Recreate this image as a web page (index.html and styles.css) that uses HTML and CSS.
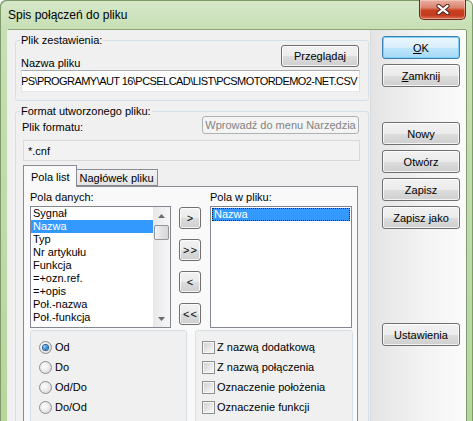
FILE: index.html
```html
<!DOCTYPE html>
<html lang="pl">
<head>
<meta charset="utf-8">
<title>Spis połączeń do pliku</title>
<link rel="stylesheet" href="styles.css">
</head>
<body>
<div class="window">
  <div class="titlebar">
    <span class="title">Spis połączeń do pliku</span>
    <div class="close">
      <svg width="14" height="11" viewBox="0 0 14 11">
        <path d="M2.5 1.8 L11.5 9.2 M11.5 1.8 L2.5 9.2" stroke="#4e2219" stroke-width="4.2" stroke-linecap="round" fill="none"/>
        <path d="M2.5 1.8 L11.5 9.2 M11.5 1.8 L2.5 9.2" stroke="#ffffff" stroke-width="2.2" stroke-linecap="round" fill="none"/>
      </svg>
    </div>
  </div>
  <div class="frame">
    <div class="client">
      <div class="main">
        <fieldset class="group g1">
          <legend>Plik zestawienia:</legend>
          <div class="row row1">
            <span class="lbl-end">Nazwa pliku</span>
            <div class="btn browse">Przeglądaj</div>
          </div>
          <div class="edit path"><span>PS\PROGRAMY\AUT 16\PCSELCAD\LIST\PCSMOTORDEMO2-NET.CSV</span></div>
        </fieldset>
        <fieldset class="group g2">
          <legend>Format utworzonego pliku:</legend>
          <div class="row row2">
            <span class="lbl-end fmt">Plik formatu:</span>
            <div class="btn disabled tools">Wprowadź do menu Narzędzia</div>
          </div>
          <div class="static">*.cnf</div>
          <div class="tabs">
            <div class="tab active">Pola list</div>
            <div class="tab">Nagłówek pliku</div>
          </div>
          <div class="tabpage">
            <div class="lists">
              <div class="col col-left">
                <div class="lbl">Pola danych:</div>
                <div class="listbox lb1">
                  <div class="items">
                    <div class="item">Sygnał</div>
                    <div class="item sel">Nazwa</div>
                    <div class="item">Typ</div>
                    <div class="item">Nr artykułu</div>
                    <div class="item">Funkcja</div>
                    <div class="item">=+ozn.ref.</div>
                    <div class="item">=+opis</div>
                    <div class="item">Poł.-nazwa</div>
                    <div class="item">Poł.-funkcja</div>
                  </div>
                  <div class="scrollbar">
                    <div class="sb-arrow">
                      <svg width="7" height="4" viewBox="0 0 7 4"><path d="M0 4 L3.5 0 L7 4 Z" fill="#6b6b6b"/></svg>
                    </div>
                    <div class="sb-thumb"></div>
                    <div class="sb-space"></div>
                    <div class="sb-arrow">
                      <svg width="7" height="4" viewBox="0 0 7 4"><path d="M0 0 L3.5 4 L7 0 Z" fill="#6b6b6b"/></svg>
                    </div>
                  </div>
                </div>
              </div>
              <div class="arrows">
                <div class="btn small">&gt;</div>
                <div class="btn small">&gt;&gt;</div>
                <div class="btn small">&lt;</div>
                <div class="btn small">&lt;&lt;</div>
              </div>
              <div class="col col-right">
                <div class="lbl">Pola w pliku:</div>
                <div class="listbox lb2">
                  <div class="item sel focus">Nazwa</div>
                </div>
              </div>
            </div>
            <div class="options">
              <div class="panel radios">
                <div class="opt"><span class="radio on"></span>Od</div>
                <div class="opt"><span class="radio"></span>Do</div>
                <div class="opt"><span class="radio"></span>Od/Do</div>
                <div class="opt"><span class="radio"></span>Do/Od</div>
              </div>
              <div class="panel checks">
                <div class="opt"><span class="check"></span>Z nazwą dodatkową</div>
                <div class="opt"><span class="check"></span>Z nazwą połączenia</div>
                <div class="opt"><span class="check"></span>Oznaczenie położenia</div>
                <div class="opt"><span class="check"></span>Oznaczenie funkcji</div>
              </div>
            </div>
          </div>
        </fieldset>
      </div>
      <div class="side">
        <div class="btn default"><span><u>O</u>K</span></div>
        <div class="btn"><span><u>Z</u>amknij</span></div>
        <div class="btn gap-big">Nowy</div>
        <div class="btn">Otwórz</div>
        <div class="btn">Zapisz</div>
        <div class="btn">Zapisz jako</div>
        <div class="btn gap-huge">Ustawienia</div>
      </div>
    </div>
  </div>
</div>
</body>
</html>
```
FILE: styles.css
```css
* { box-sizing: border-box; }
html, body { margin: 0; padding: 0; }
body {
  width: 473px;
  height: 421px;
  overflow: hidden;
  background: #ffffff;
  color: #000;
  font: 11px/14px "Liberation Sans", Arial, sans-serif;
}

.window {
  width: 473px;
  height: 421px;
  overflow: hidden;
  display: flex;
  flex-direction: column;
  background: linear-gradient(to bottom, #d7e8ca 0px, #c6dfb3 30px, #b7d69c 100%);
  border-radius: 6px 6px 0 0;
  box-shadow: inset 1px 1px 0 #7f9b6c, inset -1px 0 0 #7f9b6c;
}

/* title bar */
.titlebar {
  height: 30px;
  flex: none;
  display: flex;
  align-items: flex-start;
}
.title {
  margin: 7px 0 0 8px;
  font-size: 12px;
  line-height: 16px;
  color: #000;
}
.close {
  margin-left: auto;
  margin-right: 7px;
  width: 47px;
  height: 20px;
  border: 1px solid #6d2a1f;
  border-top: none;
  border-radius: 0 0 5px 5px;
  background: linear-gradient(to bottom, #eab0a2 0%, #dc836e 40%, #c8401f 55%, #c33a1e 80%, #d9714f 100%);
  box-shadow: inset 0 0 0 1px rgba(255, 220, 210, 0.45);
  display: flex;
  align-items: center;
  justify-content: center;
}

/* frame and client area */
.frame {
  flex: 1;
  min-height: 0;
  display: flex;
  padding: 0 7px 0 8px;
}
.client {
  flex: 1;
  display: flex;
  background: #f0f0f0;
  box-shadow: 0 -1px 0 #8ea57c, -1px 0 0 #e9f2e1, 1px 0 0 #7f9b6c;
}
.main {
  width: 362px;
  flex: none;
  padding: 3px 0 0 7px;
  background: #f0f0f0;
}
.side {
  flex: 1;
  display: flex;
  flex-direction: column;
  gap: 5px;
  padding: 6px 0 0 11px;
  border-left: 1px solid #dadada;
  background: linear-gradient(to right, #e4e4e4 0%, #f3f3f3 55%, #fbfbfb 100%);
}
.side .btn { width: 78px; height: 23px; }
.side .gap-big { margin-top: 30px; }
.side .gap-huge { margin-top: 89px; }

/* buttons */
.btn {
  display: flex;
  align-items: center;
  justify-content: center;
  border: 1px solid #707070;
  border-radius: 3px;
  background: linear-gradient(to bottom, #f2f2f2 0%, #ebebeb 50%, #dddddd 51%, #cfcfcf 100%);
  box-shadow: inset 0 0 0 1px rgba(255, 255, 255, 0.75);
  font-size: 11px;
  color: #000;
  white-space: nowrap;
}
.btn u { text-decoration: underline; text-underline-offset: 1px; }
.btn.default {
  border-color: #3c7fb1;
  background: linear-gradient(to bottom, #eaf6fd 0%, #d9f0fc 50%, #bee6fd 51%, #a7d9f5 100%);
  box-shadow: inset 0 0 0 1px #7fd0f5;
}
.btn.disabled {
  border-color: #adb2b5;
  background: #f4f4f4;
  box-shadow: none;
  color: #838383;
}
.btn.small {
  width: 22px;
  height: 22px;
  letter-spacing: 1px;
  padding-left: 1px;
}

/* group boxes */
.group {
  margin: 0;
  min-width: 0;
  width: 354px;
  border: 1px solid #d5dfe5;
  border-radius: 3px;
  padding: 0 8px 8px 5px;
}
.group legend {
  padding: 0 1px;
  margin-left: -1px;
  line-height: 14px;
}
.g2 { margin-top: 3px; padding-bottom: 0; height: 330px; }

.row {
  display: flex;
  justify-content: space-between;
}
.row1 { margin-top: -2px; height: 22px; }
.row2 { margin-top: -2px; height: 18px; }
.lbl-end { align-self: flex-end; margin-bottom: -3px; }
.fmt { margin-left: 1px; margin-bottom: 0; }
.browse { width: 78px; height: 22px; margin-right: 1px; }
.tools { width: 157px; height: 18px; margin-right: 1px; }

.edit {
  background: #fff;
  border: 1px solid #dbdfe6;
  border-top-color: #abadb3;
  border-left-color: #e2e3ea;
  border-right-color: #dbdfe6;
  border-bottom-color: #e3e9ef;
}
.path {
  margin-top: 3px;
  height: 22px;
  display: flex;
  justify-content: flex-end;
  align-items: center;
  overflow: hidden;
  padding-right: 2px;
  white-space: nowrap;
  letter-spacing: -0.56px;
}
.path span { flex: none; }

.static {
  margin: 6px 0 0 2px;
  width: 337px;
  height: 21px;
  border: 1px solid #d9d9d9;
  background: #f2f2f2;
  padding: 3px 0 0 4px;
}

/* tabs */
.tabs {
  margin: 4px 0 -1px 2px;
  height: 22px;
  display: flex;
  align-items: flex-end;
  position: relative;
  z-index: 1;
}
.tab {
  height: 17px;
  border: 1px solid #898c95;
  border-left: none;
  background: linear-gradient(to bottom, #f3f3f3, #e3e3e3);
  padding: 1px 3px 0 3px;
  margin-bottom: 1px;
  white-space: nowrap;
}
.tab.active {
  height: 22px;
  margin-bottom: 0;
  border-left: 1px solid #898c95;
  border-bottom: none;
  background: #f9f9f9;
  padding: 4px 6px 0 7px;
}
.tabpage {
  margin-left: 2px;
  width: 335px;
  height: 260px;
  border: 1px solid #898c95;
  background: #f9f9f9;
  padding: 3px 0 0 6px;
}

.lists { display: flex; align-items: flex-start; }
.col-left { width: 141px; }
.col-right { width: 142px; margin-left: 9px; }
.lbl { height: 14px; }
.listbox {
  margin-top: 2px;
  height: 122px;
  background: #fff;
  border: 1px solid #828790;
}
.lb1 { display: flex; }
.lb1 .items { flex: 1; }
.lb2 { padding: 1px; }
.item {
  height: 13px;
  line-height: 13px;
  padding-left: 2px;
  white-space: nowrap;
}
.item.sel { background: #3399ff; color: #fff; }
.item.focus { outline: 1px dotted #202020; outline-offset: -1px; }

.scrollbar {
  width: 17px;
  display: flex;
  flex-direction: column;
  background: linear-gradient(to right, #e8e8e8, #f6f6f6);
}
.sb-arrow {
  height: 17px;
  display: flex;
  align-items: center;
  justify-content: center;
}
.sb-thumb {
  height: 15px;
  margin: 1px 1px 0 1px;
  border: 1px solid #959595;
  border-radius: 2px;
  background: linear-gradient(to right, #f3f3f3, #e2e2e2 50%, #d6d6d6);
}
.sb-space { flex: 1; }

.arrows {
  margin-left: 8px;
  padding-top: 17px;
  display: flex;
  flex-direction: column;
  gap: 10px;
}

/* options */
.options {
  margin-top: 2px;
  display: flex;
  gap: 8px;
}
.panel {
  height: 100px;
  border: 1px solid #d5dfe5;
  border-radius: 3px;
  padding-top: 6px;
  background: #f0f0f0;
}
.radios { width: 157px; padding-left: 8px; }
.checks { width: 158px; padding-left: 6px; }
.opt {
  height: 20px;
  display: flex;
  align-items: center;
  white-space: nowrap;
}
.radio {
  width: 13px;
  height: 13px;
  margin-right: 3px;
  border-radius: 50%;
  border: 1px solid #8e8f8f;
  background: radial-gradient(circle at 40% 40%, #ffffff 0%, #ececec 45%, #cfcfcf 100%);
  display: flex;
  align-items: center;
  justify-content: center;
}
.radio.on::after {
  content: "";
  width: 5px;
  height: 5px;
  border-radius: 50%;
  background: radial-gradient(circle at 35% 35%, #9ad1f7 0%, #3a8ad2 50%, #1b5395 100%);
  box-shadow: 0 0 0 1px #2a5f95;
}
.check {
  width: 13px;
  height: 13px;
  margin-right: 2px;
  border: 1px solid #8e8f8f;
  background: linear-gradient(135deg, #cdcdcd 0%, #e8e8e8 55%, #fafafa 100%);
  box-shadow: inset 0 0 0 1px #f6f6f6;
}
```
